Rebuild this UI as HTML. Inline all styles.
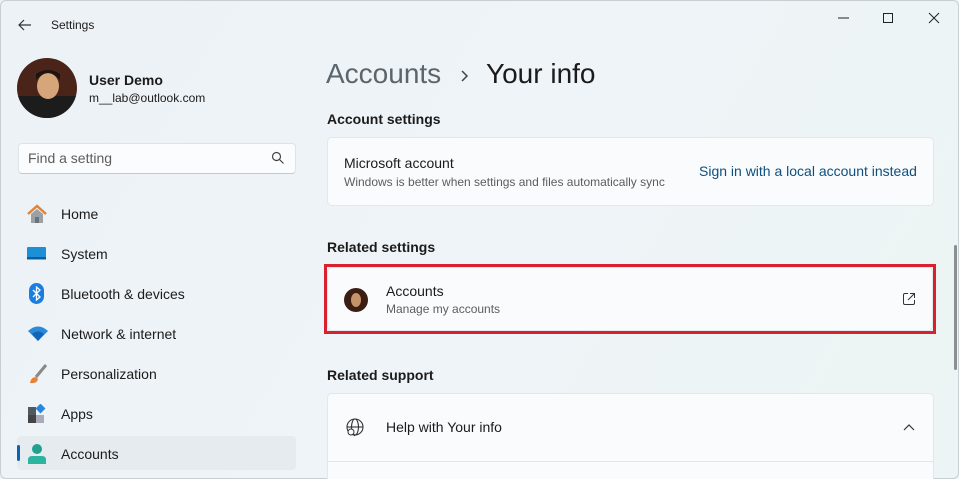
<!DOCTYPE html>
<html><head><meta charset="utf-8"><style>
*{margin:0;padding:0;box-sizing:border-box}
html,body{width:959px;height:479px;overflow:hidden}
body{background:linear-gradient(120deg,#edf2f7 0%,#eef4f7 60%,#ecf5f3 100%);font-family:"Segoe UI","Liberation Sans",sans-serif;color:#1b1b1b;position:relative}
.a{position:absolute;white-space:nowrap}
.card{position:absolute;background:#f9fbfc;border:1px solid #e3e7ea;border-radius:5px}
.nav{position:absolute;left:61px;font-size:14px}
.ic{position:absolute;left:27px}
</style></head><body>
<div class="a" style="left:0;top:0;width:959px;height:479px;border:1px solid #c9ced2;border-radius:6px"></div>
<svg class="a" style="left:17px;top:18px" width="16" height="14"><path d="M14 7H2M7 2L2 7l5 5" stroke="#333" stroke-width="1.2" fill="none"/></svg>
<div class="a" style="left:51px;top:18px;font-size:12px">Settings</div>
<svg class="a" style="left:836px;top:10px" width="110" height="16"><path d="M2 8h11" stroke="#222" stroke-width="1"/><rect x="47.5" y="3.5" width="9" height="9" fill="none" stroke="#222"/><path d="M93 3l10 10M103 3L93 13" stroke="#222"/></svg>
<svg class="a" style="left:17px;top:58px" width="60" height="60"><defs><clipPath id="c"><circle cx="30" cy="30" r="30"/></clipPath></defs><g clip-path="url(#c)"><rect width="60" height="60" fill="#4a2418"/><rect y="38" width="60" height="22" fill="#1c1c1c"/><ellipse cx="31" cy="28" rx="11" ry="13" fill="#d6a57a"/><path d="M19 22q12-14 24 0v-6q-12-8-24 0z" fill="#1c1412"/></g></svg>
<div class="a" style="left:89px;top:72px;font-size:14px;font-weight:bold">User Demo</div>
<div class="a" style="left:89px;top:91px;font-size:12px">m__lab@outlook.com</div>
<div class="a" style="left:18px;top:143px;width:278px;height:31px;background:#fbfcfd;border:1px solid #dfe3e6;border-bottom-color:#c5c9cc;border-radius:4px"></div>
<div class="a" style="left:28px;top:150px;font-size:14px;color:#5d5d5d">Find a setting</div>
<svg class="a" style="left:271px;top:151px" width="14" height="14"><circle cx="5.5" cy="5.5" r="4" stroke="#444" fill="none" stroke-width="1.2"/><path d="M8.5 8.5l4 4" stroke="#444" stroke-width="1.2"/></svg>
<svg class="ic" style="top:204px" width="20" height="20"><path d="M1 10L10 2l9 8" stroke="#e28234" stroke-width="2.5" fill="none"/><path d="M4 10v9h12v-9L10 5z" fill="#9aa0a6"/><rect x="8" y="13" width="4" height="6" fill="#6d7278"/></svg>
<div class="nav" style="top:206px">Home</div>
<svg class="ic" style="top:247px" width="20" height="14"><rect width="19" height="12" rx="1" fill="#1d8fd6"/><rect y="10" width="19" height="2.5" fill="#0a5ea0"/></svg>
<div class="nav" style="top:246px">System</div>
<svg class="ic" style="top:283px" width="20" height="22"><rect x="2" y="0" width="15" height="21" rx="7.5" fill="#1a7ee0"/><path d="M6 7l7 7-3.5 3V4L13 7 6 14" stroke="#fff" stroke-width="1.3" fill="none"/></svg>
<div class="nav" style="top:286px">Bluetooth &amp; devices</div>
<svg class="ic" style="top:326px" width="22" height="16"><path d="M1 5q10-9 20 0l-10 10z" fill="#2a8ad8"/><path d="M5 8q6-5 12 0l-6 7z" fill="#1065b8"/></svg>
<div class="nav" style="top:326px">Network &amp; internet</div>
<svg class="ic" style="top:363px" width="22" height="22"><path d="M19 2L9 14" stroke="#888" stroke-width="3"/><path d="M3 20q1-6 6-6l2 2q-1 5-8 4z" fill="#e7813a"/></svg>
<div class="nav" style="top:366px">Personalization</div>
<svg class="ic" style="top:404px" width="20" height="20"><rect x="1" y="3" width="8" height="8" fill="#505860"/><rect x="1" y="11" width="8" height="8" fill="#444"/><rect x="9" y="11" width="8" height="8" fill="#aab"/><rect x="10" y="1" width="7" height="7" fill="#2a86d8" transform="rotate(45 13.5 4.5)"/></svg>
<div class="nav" style="top:406px">Apps</div>
<div class="a" style="left:17px;top:436px;width:279px;height:34px;background:#e6ebef;border-radius:4px"></div>
<div class="a" style="left:17px;top:445px;width:3px;height:16px;background:#0b63b8;border-radius:2px"></div>
<svg class="ic" style="top:443px" width="20" height="22"><circle cx="10" cy="6" r="5" fill="#20a08e"/><path d="M1 21v-4q0-4 4-4h10q4 0 4 4v4z" fill="#2bb5a0"/></svg>
<div class="nav" style="top:446px">Accounts</div>
<div class="a" style="left:326px;top:58px;font-size:28px;color:#5c656b">Accounts</div>
<svg class="a" style="left:460px;top:69px" width="10" height="14"><path d="M2 2l5 5-5 5" stroke="#444" stroke-width="1.5" fill="none"/></svg>
<div class="a" style="left:486px;top:58px;font-size:28px;color:#1b1b1b">Your info</div>
<div class="a" style="left:327px;top:111px;font-size:14px;font-weight:600">Account settings</div>
<div class="card" style="left:327px;top:137px;width:607px;height:69px"></div>
<div class="a" style="left:344px;top:155px;font-size:14px">Microsoft account</div>
<div class="a" style="left:344px;top:175px;font-size:12px;color:#5d5d5d">Windows is better when settings and files automatically sync</div>
<div class="a" style="left:699px;top:163px;font-size:14px;color:#0f4f7e">Sign in with a local account instead</div>
<div class="a" style="left:327px;top:239px;font-size:14px;font-weight:600">Related settings</div>
<div class="card" style="left:327px;top:267px;width:606px;height:64px"></div>
<div class="a" style="left:324px;top:264px;width:612px;height:70px;border:3px solid #d8202e"></div>
<svg class="a" style="left:344px;top:288px" width="24" height="24"><circle cx="12" cy="12" r="12" fill="#3b1d14"/><ellipse cx="12" cy="12" rx="5" ry="7" fill="#c4936c"/></svg>
<div class="a" style="left:386px;top:283px;font-size:14px">Accounts</div>
<div class="a" style="left:386px;top:302px;font-size:12px;color:#5d5d5d">Manage my accounts</div>
<svg class="a" style="left:902px;top:292px" width="14" height="14"><path d="M6 1.5H3Q1.5 1.5 1.5 3v8q0 1.5 1.5 1.5h8q1.5 0 1.5-1.5V8M8 1.5h4.5V6M12.5 1.5L6 8" stroke="#333" fill="none"/></svg>
<div class="a" style="left:327px;top:367px;font-size:14px;font-weight:600">Related support</div>
<div class="card" style="left:327px;top:393px;width:607px;height:90px"></div>
<div class="a" style="left:328px;top:461px;width:605px;height:1px;background:#e3e7ea"></div>
<svg class="a" style="left:345px;top:418px" width="20" height="20"><circle cx="10" cy="9" r="8" fill="none" stroke="#333" stroke-width="1.1"/><ellipse cx="10" cy="9" rx="3.5" ry="8" fill="none" stroke="#333" stroke-width="1.1"/><path d="M2 9h16" stroke="#333" stroke-width="1.1"/><circle cx="6" cy="14" r="3" fill="#fafcfd" stroke="#333"/><path d="M8 16l2 2" stroke="#333"/></svg>
<div class="a" style="left:386px;top:419px;font-size:14px">Help with Your info</div>
<svg class="a" style="left:902px;top:423px" width="14" height="10"><path d="M2 7l5-5 5 5" stroke="#333" stroke-width="1.2" fill="none"/></svg>
<div class="a" style="left:954px;top:245px;width:3px;height:125px;background:#8a8f93;border-radius:2px"></div>
</body></html>
